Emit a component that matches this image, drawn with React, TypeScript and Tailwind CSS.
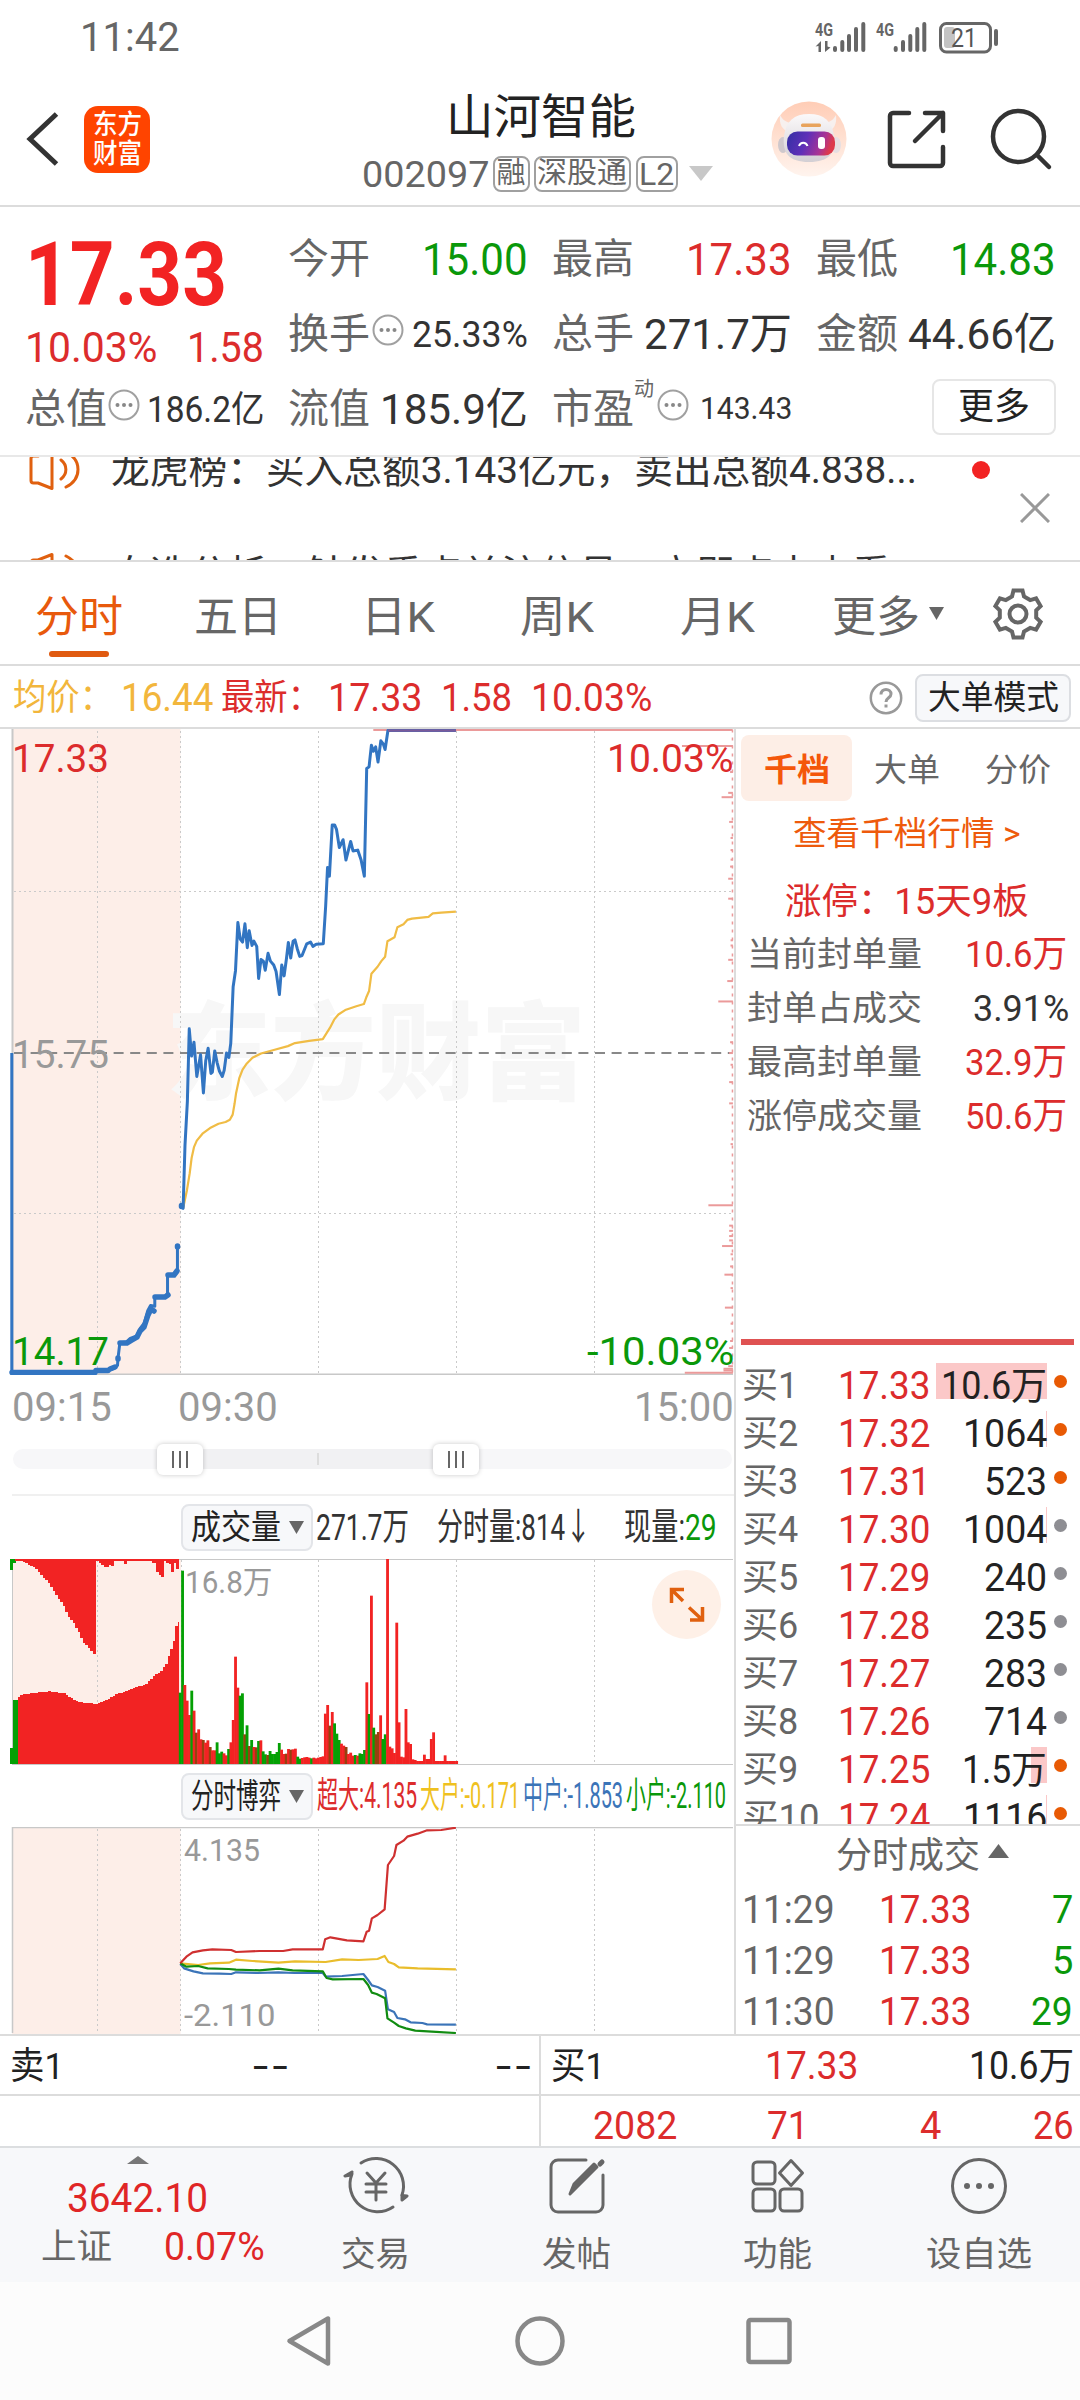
import { useLayoutEffect, useRef, type ReactNode } from "react";

const FONT = "font-[Roboto,'Noto_Sans_CJK_SC',sans-serif]";

// Squeezes or stretches a single line of text to the width of its box.
function Fit({ className, children }: { className: string; children: ReactNode }) {
  const box = useRef<HTMLSpanElement>(null);
  const text = useRef<HTMLSpanElement>(null);

  useLayoutEffect(() => {
    if (!box.current || !text.current) return;
    const ratio = box.current.clientWidth / text.current.offsetWidth;
    text.current.style.transform = `scaleX(${ratio})`;
  });

  return (
    <span ref={box} className={`block shrink-0 leading-none whitespace-nowrap ${className}`}>
      <span ref={text} className="inline-block origin-left">
        {children}
      </span>
    </span>
  );
}

type Pt = [number, number];

function lerp(points: Pt[], x: number) {
  for (let i = 1; i < points.length; i++) {
    const [x0, y0] = points[i - 1];
    const [x1, y1] = points[i];
    if (x <= x1) return y0 + ((y1 - y0) * (x - x0)) / (x1 - x0);
  }
  return points[points.length - 1][1];
}

function StatusBar() {
  return (
    <div className="flex h-[75px] items-center text-[#666]">
      <Fit className="mt-px ml-[80px] w-[100px] text-[40px]">11:42</Fit>
      <svg className="ml-[632px]" width="190" height="40" viewBox="812 17 190 40">
        <g fill="#666" fontFamily="Roboto, sans-serif" fontWeight="700" fontSize="18">
          <text x="815" y="34.5" textLength="18" lengthAdjust="spacingAndGlyphs">4G</text>
          <text x="876" y="34.5" textLength="18" lengthAdjust="spacingAndGlyphs">4G</text>
          <path d="M815.500 45.500l5.500-5.500v11h-2.500v-6zM825 40v11l5.500-4.500-3-1v-5.500z" />
        </g>
        <g stroke="#666" strokeWidth="4" strokeLinecap="round">
          <path d="M835 47v2M842.300 41v8M849 35v14M856 28v21M863.300 23v26" />
          <path d="M895.700 47v2M903 41v8M910.300 35v14M917.300 28v21M924.300 23v26" />
          <path d="M996 30v13" />
        </g>
        <rect x="944" y="26" width="11" height="21" rx="3" fill="#c4c4c4" />
        <rect x="940.500" y="22.500" width="50" height="28.500" rx="6" fill="none" stroke="#666" strokeWidth="3" />
        <text x="951" y="46" fill="#555" fontFamily="Roboto, sans-serif" fontSize="26" textLength="26" lengthAdjust="spacingAndGlyphs">21</text>
      </svg>
    </div>
  );
}

function Tag({ className, children }: { className: string; children: ReactNode }) {
  return (
    <span className={`flex h-[36px] items-center justify-center rounded-[8px] border-2 border-[#a0a0a0] ${className}`}>
      {children}
    </span>
  );
}

function Robot() {
  return (
    <svg width="76" height="76" viewBox="0 0 76 76">
      <defs>
        <linearGradient id="halo" x1="0" y1="0" x2="0" y2="1">
          <stop offset="0" stopColor="#ffcdb6" />
          <stop offset="1" stopColor="#fff4ee" />
        </linearGradient>
        <linearGradient id="visor" x1="0" y1="0" x2="1" y2="0.2">
          <stop offset="0" stopColor="#3430a4" />
          <stop offset="0.45" stopColor="#5f2fb8" />
          <stop offset="0.8" stopColor="#a83495" />
          <stop offset="1" stopColor="#dd3a4c" />
        </linearGradient>
        <linearGradient id="helmet" x1="0" y1="0" x2="0" y2="1">
          <stop offset="0" stopColor="#fbf9fa" />
          <stop offset="1" stopColor="#d3cfd4" />
        </linearGradient>
      </defs>
      <circle cx="38" cy="38" r="37.500" fill="url(#halo)" />
      <path d="M9 14c-1 9 2 15 9 17l7-9c-7 1-13-2-16-8zM65 14c1 9-2 15-9 17l-7-9c7 1 13-2 16-8z" fill="#f7f0ee" />
      <ellipse cx="12" cy="44" rx="5" ry="8" fill="#cfc8cc" />
      <ellipse cx="65" cy="44" rx="5" ry="8" fill="#e6dfe2" />
      <path d="M38 13c15 0 23 7 25 22 2 17-5 26-25 26S11 52 13 35c2-15 10-22 25-22z" fill="url(#helmet)" />
      <rect x="30" y="22.500" width="20" height="3.500" rx="1.500" fill="#e8a35c" />
      <rect x="16" y="30.500" width="48" height="24" rx="10.500" fill="url(#visor)" />
      <path d="M28 45c1.500-4.500 7-4.500 8.500 0" fill="none" stroke="#fff" strokeWidth="2" />
      <rect x="47" y="36" width="7" height="12" rx="3" fill="#fff" />
    </svg>
  );
}

function Header() {
  return (
    <div className="flex h-[132px] items-start border-b-2 border-[#dcdcdc]">
      <svg className="mt-[36px] ml-[24px]" width="36" height="56" viewBox="0 0 36 56" fill="none" stroke="#333" strokeWidth="5">
        <path d="M32.500 3L6 28l26.500 25" />
      </svg>
      <div className="mt-[31px] ml-[24px] flex h-[67px] w-[66px] flex-col items-center justify-center rounded-[14px] bg-[#ff4400] text-[27px] font-medium text-white">
        <Fit className="w-[49px]">东方</Fit>
        <Fit className="mt-[2px] w-[49px]">财富</Fit>
      </div>
      <div className="ml-[207px] flex w-[360px] flex-col items-center">
        <Fit className="mt-[18px] ml-[8px] w-[190px] text-[47px] text-[#222]">山河智能</Fit>
        <div className="mt-[14px] flex items-center text-[#666]">
          <Fit className="mt-[3px] mr-[4px] w-[127px] text-[36px]">002097</Fit>
          <Tag className="mr-[4px] w-[37px]">
            <Fit className="w-[29px] text-[29px]">融</Fit>
          </Tag>
          <Tag className="mr-[5px] w-[97px]">
            <Fit className="w-[90px] text-[29px]">深股通</Fit>
          </Tag>
          <Tag className="mr-[11px] w-[42px]">
            <Fit className="w-[35px] text-[32px]">L2</Fit>
          </Tag>
          <svg width="24" height="15" viewBox="0 0 24 15">
            <path d="M0 0h24L12 15z" fill="#c8c8c8" />
          </svg>
        </div>
      </div>
      <div className="mt-[26px] ml-[54px] flex">
        <Robot />
        <svg className="ml-[37px]" width="66" height="76" viewBox="884 101 66 76" fill="none" stroke="#333" strokeWidth="4.500" strokeLinecap="round" strokeLinejoin="round">
          <path d="M909 113h-16a3 3 0 0 0-3 3v47a3 3 0 0 0 3 3h47a3 3 0 0 0 3-3v-16M925 113h18v18M943 113l-28 28" />
        </svg>
        <svg className="ml-[38px]" width="66" height="76" viewBox="988 101 66 76" fill="none" stroke="#333" strokeWidth="4.500" strokeLinecap="round">
          <circle cx="1018.500" cy="136.500" r="25.500" />
          <path d="M1037 155l12 12" />
        </svg>
      </div>
    </div>
  );
}

function InfoDots({ className }: { className: string }) {
  return (
    <svg className={`shrink-0 ${className}`} width="32" height="32" viewBox="0 0 32 32">
      <circle cx="16" cy="16" r="14.500" fill="none" stroke="#a0a0a0" strokeWidth="2" />
      <circle cx="9.500" cy="16" r="2" fill="#888" />
      <circle cx="16" cy="16" r="2" fill="#888" />
      <circle cx="22.500" cy="16" r="2" fill="#888" />
    </svg>
  );
}

function Label({ children }: { children: ReactNode }) {
  return <Fit className="w-[82px] text-[41px] text-[#666]">{children}</Fit>;
}

function Quote() {
  return (
    <div className="h-[250px] border-b-2 border-[#e8e8e8] pt-[15px] pl-[25px]">
      <div className="grid grid-cols-[263px_264px_264px_240px] grid-rows-[75px_75px_75px] items-center">
        <div className="row-span-2 h-[150px] text-[#dc2c2c]">
          <div className="flex h-[102px] items-center pt-[2px]">
            <Fit className="w-[202px] text-[89px] font-bold text-[#f22323]">17.33</Fit>
          </div>
          <div className="flex h-[46px] items-center justify-between pr-[24px]">
            <Fit className="w-[133px] text-[43px]">10.03%</Fit>
            <Fit className="w-[77px] text-[43px]">1.58</Fit>
          </div>
        </div>
        <div className="flex items-center justify-between pr-[24px]">
          <Label>今开</Label>
          <Fit className="w-[106px] text-[44px] text-[#0a980a]">15.00</Fit>
        </div>
        <div className="flex items-center justify-between pr-[24px]">
          <Label>最高</Label>
          <Fit className="w-[106px] text-[44px] text-[#dc2c2c]">17.33</Fit>
        </div>
        <div className="flex items-center justify-between">
          <Label>最低</Label>
          <Fit className="w-[106px] text-[44px] text-[#0a980a]">14.83</Fit>
        </div>
        <div className="flex items-center pr-[24px]">
          <Label>换手</Label>
          <InfoDots className="mt-[-9px] ml-[2px]" />
          <Fit className="ml-auto w-[116px] text-[36px] text-[#333]">25.33%</Fit>
        </div>
        <div className="flex items-center justify-between pr-[24px]">
          <Label>总手</Label>
          <Fit className="w-[148px] text-[43px] text-[#333]">271.7万</Fit>
        </div>
        <div className="flex items-center justify-between">
          <Label>金额</Label>
          <Fit className="w-[148px] text-[43px] text-[#333]">44.66亿</Fit>
        </div>
        <div className="flex items-center pr-[24px]">
          <Label>总值</Label>
          <InfoDots className="mt-[-9px] ml-[1px]" />
          <Fit className="ml-auto w-[117px] text-[36px] text-[#333]">186.2亿</Fit>
        </div>
        <div className="flex items-center justify-between pr-[24px]">
          <Label>流值</Label>
          <Fit className="w-[148px] text-[43px] text-[#333]">185.9亿</Fit>
        </div>
        <div className="flex items-center pr-[24px]">
          <Label>市盈</Label>
          <Fit className="mt-[-42px] w-[20px] text-[20px] text-[#666]">动</Fit>
          <InfoDots className="mt-[-9px] ml-[3px]" />
          <Fit className="mt-[-2px] ml-auto w-[92px] text-[31px] text-[#333]">143.43</Fit>
        </div>
        <div className="mt-[-6px] ml-auto flex h-[56px] w-[124px] items-center justify-center rounded-[8px] border-2 border-[#e6e6e6]">
          <Fit className="w-[72px] text-[36px] text-[#222]">更多</Fit>
        </div>
      </div>
    </div>
  );
}

function Speaker() {
  return (
    <svg className="shrink-0" width="54" height="42" viewBox="0 0 54 42" fill="none" stroke="#e0600f" strokeWidth="3" strokeLinecap="round" strokeLinejoin="round">
      <path d="M10 7H5.500A2.500 2.500 0 0 0 3 9.500v22A2.500 2.500 0 0 0 5.500 34H10l14 5.500v-38L10 7" />
      <path d="M33 11c6.500 5 6.500 14 0 19M38 3c16 8 16 27 0 35" />
    </svg>
  );
}

function News() {
  return (
    <div className="relative h-[105px] overflow-hidden border-b-2 border-[#dcdcdc] text-[38px] text-[#333]">
      <div className="-mt-[39px] ml-[28px] flex h-[104px] items-center">
        <Speaker />
        <Fit className="ml-[29px] w-[806px]">龙虎榜：买入总额3.143亿元，卖出总额4.838...</Fit>
        <span className="ml-[55px] size-[18px] rounded-full bg-[#f22323]" />
      </div>
      <div className="ml-[28px] flex h-[104px] items-center">
        <Speaker />
        <Fit className="ml-[29px] w-[780px]">自选分析：触发重点关注信号，立即点击查看</Fit>
      </div>
      <svg className="absolute top-[36px] right-[30px]" width="30" height="30" viewBox="0 0 30 30" stroke="#999" strokeWidth="3">
        <path d="M1 1l28 28M29 1L1 29" />
      </svg>
    </div>
  );
}

function gearPath() {
  const pts: string[] = [];
  for (let k = 0; k < 6; k++) {
    const a = (k * Math.PI) / 3;
    const corners: Pt[] = [[-6, -17.5], [-4.5, -23.5], [4.5, -23.5], [6, -17.5]];
    for (const [x, y] of corners) {
      const px = x * Math.cos(a) - y * Math.sin(a);
      const py = x * Math.sin(a) + y * Math.cos(a);
      pts.push(`${px.toFixed(1)} ${py.toFixed(1)}`);
    }
  }
  return `M${pts.join("L")}Z`;
}

function Tabs() {
  return (
    <div className="flex h-[104px] border-b-2 border-[#dcdcdc] text-[43px] text-[#666]">
      <div className="ml-[35px] flex w-[88px] flex-col items-center pt-[34px]">
        <Fit className="w-[88px] text-[#e8590c]">分时</Fit>
        <span className="mt-[12px] h-[6px] w-[60px] rounded-full bg-[#e05a10]" />
      </div>
      <Fit className="mt-[34px] ml-[71px] w-[88px]">五日</Fit>
      <Fit className="mt-[34px] ml-[79px] w-[74px]">日K</Fit>
      <Fit className="mt-[34px] ml-[85px] w-[74px]">周K</Fit>
      <Fit className="mt-[34px] ml-[86px] w-[75px]">月K</Fit>
      <Fit className="mt-[34px] ml-[77px] w-[88px]">更多</Fit>
      <svg className="mt-[45px] ml-[9px]" width="15" height="13" viewBox="0 0 15 13">
        <path d="M0 0h15L7.500 13z" fill="#666" />
      </svg>
      <svg className="mt-[24px] ml-[46px]" width="56" height="56" viewBox="-28 -28 56 56" fill="none" stroke="#666" strokeWidth="4">
        <path d={gearPath()} />
        <circle r="8.500" />
      </svg>
    </div>
  );
}

function InfoRow() {
  return (
    <div className="flex h-[63px] items-center border-b-2 border-[#dcdcdc] pt-[2px] text-[36px] text-[#dc2c2c]">
      <Fit className="ml-[13px] w-[100px] text-[#f2b63c]">均价：</Fit>
      <Fit className="ml-[8px] w-[92px] text-[38px] text-[#f2b63c]">16.44</Fit>
      <Fit className="ml-[8px] w-[100px]">最新：</Fit>
      <Fit className="ml-[7px] w-[94px] text-[38px]">17.33</Fit>
      <Fit className="ml-[19px] w-[71px] text-[38px]">1.58</Fit>
      <Fit className="ml-[19px] w-[121px] text-[38px]">10.03%</Fit>
      <svg className="ml-[217px]" width="34" height="34" viewBox="0 0 34 34" fill="none" stroke="#999" strokeWidth="2.500">
        <circle cx="17" cy="17" r="15.200" />
        <path d="M12 13.500c0-7 10-6.500 10-.5 0 4-5 3.500-5 8" strokeWidth="3" />
        <path d="M17 23.500v3" strokeWidth="3" />
      </svg>
      <div className="ml-[12px] flex h-[48px] w-[156px] items-center justify-center rounded-[8px] border-2 border-[#dcdee2] bg-[#f7f8fa]">
        <Fit className="w-[131px] text-[33px] text-[#222]">大单模式</Fit>
      </div>
    </div>
  );
}

const GRID_X = [97.5, 318.5, 456.5, 594.5];

const PRICE_LINE =
  "25,768 25,1504 200,1504 205,1500 230,1500 243,1494 249,1488 250,1472 254,1436 268,1434 276,1426 290,1420 297,1403 306,1390 313,1362 319,1350 328,1352 328,1331 350,1330 355,1322 355,1280 368,1278 376,1268 376,1214";
const OPEN_LINE =
  "382,1120 388,1126 392,980 397,880 401,712 406,775 411,743 417,822 425,772 431,860 436,785 441,757 447,815 450,812 455,763 460,790 465,810 471,822 475,808 480,768 485,778 489,745 494,615 499,578 504,467 509,505 514,512 519,470 524,525 528,486 534,520 538,510 544,522 548,596 553,552 558,556 562,577 568,538 573,556 580,565 585,580 592,633 597,565 602,590 607,550 611,513 616,549 621,510 625,507 630,528 635,545 640,543 650,516 658,512 663,522 670,517 685,516 690,430 694,340 698,360 704,242 709,242 713,252 719,294 727,276 733,323 743,280 748,302 758,300 765,322 772,360 777,112 782,108 787,58 791,72 796,62 801,97 807,48 812,55 816,68 822,24 966,24";
const AVG_LINE =
  "388,1126 396,1085 402,1045 406,1010 411,985 417,970 429,954 445,941 463,931 478,927 487,922 493,910 497,885 500,862 507,826 514,806 523,792 535,779 553,769 580,761 610,752 625,745 655,740 684,736 692,722 699,710 708,691 717,679 733,668 755,660 771,655 776,640 782,625 787,585 800,569 808,556 816,546 821,510 836,501 842,478 855,471 863,461 873,458 908,454 917,446 935,444 966,442";

// [y, length] of the volume-by-price ticks along the right edge
const PRICE_TICKS: Pt[] = [
  [60, 108], [120, 6], [168, 10], [178, 24], [235, 8], [272, 5], [300, 5], [322, 5], [338, 6], [366, 10],
  [412, 10], [508, 5], [520, 5], [553, 10], [602, 12], [649, 31], [743, 6], [768, 8], [795, 5], [835, 8],
  [884, 8], [978, 5], [1119, 52], [1166, 8], [1178, 8], [1190, 8], [1200, 8], [1213, 23], [1232, 5],
  [1260, 6], [1279, 18], [1310, 5], [1355, 17], [1392, 5], [1432, 6], [1448, 8], [1490, 10], [1496, 20],
  [1500, 20], [1505, 102],
];

function PriceChart() {
  return (
    <div className="relative h-[646px] text-[39px]">
      <svg className="block" width="734" height="646" viewBox="0 729 734 646">
        <rect x="12" y="729" width="168.500" height="646" fill="#fdeee8" />
        <g fill="#f7f7f7" fontFamily="'Noto Sans CJK SC', sans-serif" fontWeight="900">
          <text x="166" y="1091" fontSize="106" textLength="420" lengthAdjust="spacingAndGlyphs">东方财富</text>
        </g>
        <g stroke="#cacaca" strokeWidth="1" strokeDasharray="2 3" shapeRendering="crispEdges">
          {[...GRID_X, 180.5].map((x) => (
            <path key={x} d={`M${x} 731V1374`} />
          ))}
          <path d="M14 891.500H732M14 1213.500H732" />
        </g>
        <path d="M14 1053H732" stroke="#888" strokeWidth="2" strokeDasharray="10 6.600" />
        <path d="M12.500 729V1375M10 1374.500H733" stroke="#c8c8c8" strokeWidth="2" fill="none" />
        <g transform="translate(0 720) scale(0.47194 0.43367)" fill="none" strokeLinejoin="round">
          <g stroke="#eb9a9a" strokeWidth="2">
            <path d="M791 23H1552" vectorEffect="non-scaling-stroke" />
            {PRICE_TICKS.map(([y, len]) => (
              <path key={y} d={`M${1553 - len} ${y}H1553`} vectorEffect="non-scaling-stroke" />
            ))}
            <path d="M1552 22V1508" strokeDasharray="3 5" strokeWidth="1.500" vectorEffect="non-scaling-stroke" />
          </g>
          <polyline points={AVG_LINE} stroke="#f0bc45" strokeWidth="2.200" vectorEffect="non-scaling-stroke" />
          <polyline points={PRICE_LINE} stroke="#3275c2" strokeWidth="3" vectorEffect="non-scaling-stroke" />
          <polyline points={OPEN_LINE} stroke="#3275c2" strokeWidth="3" vectorEffect="non-scaling-stroke" />
          <path d="M822 24H966" stroke="#7a5a9a" strokeWidth="2.500" vectorEffect="non-scaling-stroke" />
        </g>
        <g stroke="#3275c2" strokeWidth="5.500" fill="none" strokeLinecap="round">
          <path d="M12 1372.500H95M96 1370.500H108M110 1369l5-2M118 1359v-1M120 1343h7l5-3 5-3 3-6 4-4 4-12 3-6 3 2M155 1297h10l3-2M168 1275h6l3-4M177.500 1246v1M181.500 1205.500v1" />
        </g>
      </svg>
      <Fit className="absolute top-[11px] left-[12px] w-[97px] text-[#dc2c2c]">17.33</Fit>
      <Fit className="absolute top-[11px] left-[607px] w-[127px] text-[#dc2c2c]">10.03%</Fit>
      <Fit className="absolute top-[307px] left-[12px] w-[97px] text-[#999]">15.75</Fit>
      <Fit className="absolute top-[604px] left-[12px] w-[97px] text-[#0a980a]">14.17</Fit>
      <Fit className="absolute top-[604px] left-[587px] w-[147px] text-[#0a980a]">-10.03%</Fit>
    </div>
  );
}

function Handle({ className }: { className: string }) {
  return (
    <span className={`absolute -top-[5px] flex h-[31px] w-[46px] items-center justify-center gap-[5px] rounded-[6px] bg-white shadow-[0_0_5px_rgba(0,0,0,0.22)] ${className}`}>
      <span className="h-[17px] w-[2px] bg-[#666]" />
      <span className="h-[17px] w-[2px] bg-[#666]" />
      <span className="h-[17px] w-[2px] bg-[#666]" />
    </span>
  );
}

function TimeAxis() {
  return (
    <>
      <div className="flex h-[64px] items-center pt-[2px] text-[40px] text-[#999]">
        <Fit className="ml-[12px] w-[100px]">09:15</Fit>
        <Fit className="ml-[66px] w-[100px]">09:30</Fit>
        <Fit className="ml-auto w-[100px]">15:00</Fit>
      </div>
      <div className="ml-[12px] h-[57px] border-b-2 border-[#f0f0f0] pt-[10px]">
        <div className="relative mr-[2px] ml-[1px] flex h-[20px] items-center rounded-full bg-[#f7f7f9] pl-[167px]">
          <div className="flex h-[20px] w-[276px] items-center justify-center bg-[#f1f1f3]">
            <span className="h-[12px] w-[2px] bg-[#ddd]" />
          </div>
          <Handle className="left-[144px]" />
          <Handle className="left-[420px]" />
        </div>
      </div>
    </>
  );
}

function Picker({ children }: { children: ReactNode }) {
  return (
    <div className="ml-[181px] flex h-[47px] w-[132px] shrink-0 items-center rounded-[8px] border-2 border-[#e3e5e9] bg-[#f7f8fa] pl-[8px] text-[34px] text-[#222]">
      <Fit className="w-[90px]">{children}</Fit>
      <svg className="ml-[8px]" width="15" height="13" viewBox="0 0 15 13">
        <path d="M0 0h15L7.500 13z" fill="#666" />
      </svg>
    </div>
  );
}

const RED = "#f22323";
const GREEN = "#04a004";
const BROWN = "#95420f";

// One entry per minute from 09:30, height in thirds of a pixel
const BARS =
  "g214 g580 r237 r190 r147 g220 r160 b94 r104 r74 b72 r64 r71 b51 r41 r41 g65 g32 g37 r32 r26 g45 r65 r132 r322 r229 g205 g212 b89 g116 b54 g72 r51 b50 g69 r71 g38 g29 b27 g39 g30 g30 g36 g63 r43 r30 b31 r45 b43 r44 r46 g22 g16 r18 r20 r21 r19 g17 r19 r17 r19 r21 r23 r151 r177 b115 r156 g122 g91 g72 r61 r55 b51 r30 r34 r25 g27 r25 g32 g30 g42 r245 g150 r505 g109 b89 b96 r146 g75 g89 r615 r52 r47 r33 r424 r125 r22 r20 r165 r65 r60 r14 r12 r9 r9 r9 r28 r15 r15 r75 r95 r9 r9 r9 r9 r26 r9 r9 r9 r9 r9"
    .split(" ");

const MATCHED: Pt[] = [
  [50, 414], [70, 403], [110, 398], [150, 394], [195, 400], [205, 411], [240, 427], [290, 432], [320, 420],
  [345, 405], [390, 388], [440, 372], [460, 350], [485, 332], [500, 310], [515, 265], [525, 235], [531, 187], [540, 187],
];
const UNMATCHED: Pt[] = [
  [54, 0], [62, 3], [80, 10], [110, 26], [135, 55], [150, 70], [165, 98], [195, 140], [205, 168], [220, 185],
  [240, 220], [250, 246], [268, 264], [288, 288],
];
const SPIKES: Pt[] = [
  [294, 4], [301, 10], [308, 14], [315, 20], [322, 22], [330, 16], [337, 18], [345, 4], [375, 13], [459, 10],
  [465, 8], [473, 37], [480, 46], [488, 50], [502, 10], [510, 12], [517, 37], [525, 8], [533, 26],
];

function VolumeChart() {
  const steps = Array.from({ length: 65 }, (_, i) => 54 + i * 7.5);
  return (
    <div className="relative h-[206px]">
      <svg className="block" width="734" height="206" viewBox="0 1559 734 206" shapeRendering="crispEdges">
        <rect x="12" y="1559" width="168.500" height="206" fill="#fdeee8" />
        <g stroke="#cacaca" strokeWidth="1" strokeDasharray="2 3">
          {[...GRID_X, 181.5].map((x) => (
            <path key={x} d={`M${x} 1560V1764`} />
          ))}
        </g>
        <path d="M12.500 1559V1764M12 1764.500H733M12 1559.500H733" stroke="#c8c8c8" strokeWidth="1.500" />
        <g transform="translate(0 1560) scale(0.33333)">
          <rect x="31" y="563" width="8" height="49" fill={GREEN} />
          <rect x="38" y="420" width="17" height="192" fill={GREEN} />
          <rect x="31" y="-3" width="9" height="33" fill={GREEN} />
          <rect x="39" y="-3" width="9" height="12" fill={GREEN} />
          {steps.map((x) => (
            <rect key={x} x={x} y={lerp(MATCHED, x + 3)} width={Math.min(8, 538 - x)} height={612 - lerp(MATCHED, x + 3)} fill={RED} />
          ))}
          {steps.filter((x) => x < 284).map((x) => (
            <rect key={x} x={x} y={-3} width="8" height={lerp(UNMATCHED, x + 4) + 3} fill={RED} />
          ))}
          <rect x="46" y="-3" width="492" height="5" fill={RED} />
          {SPIKES.map(([x, depth]) => (
            <rect key={x} x={x - 4} y={-3} width="9" height={depth + 3} fill={RED} />
          ))}
          <g shapeRendering="auto">
            {BARS.map((bar, i) => {
              const h = Number(bar.slice(1));
              const fill = bar[0] === "g" ? GREEN : bar[0] === "b" ? BROWN : RED;
              return <rect key={i} x={536.5 + i * 6.91} y={612 - h} width="8.500" height={h} fill={fill} />;
            })}
          </g>
        </g>
      </svg>
      <Fit className="absolute top-[8px] left-[185px] w-[87px] text-[31px] text-[#999]">16.8万</Fit>
      <div className="absolute top-[11px] right-[13px] size-[69px] rounded-full bg-[#fef0e7]">
        <svg width="69" height="69" viewBox="0 0 69 69" fill="none" stroke="#e0600f" strokeWidth="3.500">
          <path d="M32 19.500H19.500V33M19.500 19.500L31 31M38 50h12.500V37M50.500 50L37 37.500" />
        </svg>
      </div>
    </div>
  );
}

const FLOWS = [
  { stroke: "#e9bd2c", points: "382,640 420,645 445,640 485,638 500,629 535,633 590,638 625,634 690,636 725,628 760,630 800,627 815,618 823,636 835,642 845,652 885,655 966,658" },
  { stroke: "#3b74b8", points: "382,642 390,655 410,664 430,670 465,671 490,672 500,667 545,669 590,667 625,669 684,669 690,680 725,678 770,672 780,690 788,706 800,711 816,722 822,778 835,786 842,804 858,808 870,817 895,819 905,823 966,824" },
  { stroke: "#118c11", points: "382,640 395,650 420,648 440,655 485,657 500,659 550,661 590,656 620,661 684,664 692,684 705,688 770,687 780,705 788,728 798,732 816,745 821,805 835,818 845,828 860,835 880,842 915,845 966,849" },
  { stroke: "#cf3030", points: "382,640 395,620 408,607 430,601 450,598 490,600 500,606 550,603 600,603 620,598 684,598 689,568 700,562 735,571 770,574 777,545 782,542 788,505 800,495 815,478 822,345 835,318 840,285 855,272 863,260 885,251 905,241 935,240 966,233" },
];

function FlowChart() {
  return (
    <div className="relative h-[207px] text-[31px] text-[#999]">
      <svg className="block" width="734" height="207" viewBox="0 1827 734 207">
        <rect x="12" y="1827" width="168.500" height="207" fill="#fdeee8" />
        <g stroke="#cacaca" strokeWidth="1" strokeDasharray="2 3" shapeRendering="crispEdges">
          {[...GRID_X, 180.5].map((x) => (
            <path key={x} d={`M${x} 1829V2033`} />
          ))}
        </g>
        <path d="M12.500 1827V2033M12 1827.500H733" stroke="#c8c8c8" strokeWidth="1.500" />
        <g transform="translate(0 1750) scale(0.47194 0.33333)" fill="none" strokeLinejoin="round">
          {FLOWS.map((f) => (
            <polyline key={f.stroke} points={f.points} stroke={f.stroke} strokeWidth="2.200" vectorEffect="non-scaling-stroke" />
          ))}
        </g>
      </svg>
      <Fit className="absolute top-[8px] left-[184px] w-[76px]">4.135</Fit>
      <Fit className="absolute top-[173px] left-[184px] w-[91px]">-2.110</Fit>
    </div>
  );
}

const BIDS = [
  { price: "17.33", qty: "10.6万", w: "w-[106px]", bar: "w-[111px]", hot: true },
  { price: "17.32", qty: "1064", w: "w-[84px]", bar: "w-px", hot: true },
  { price: "17.31", qty: "523", w: "w-[63px]", bar: "w-0", hot: true },
  { price: "17.30", qty: "1004", w: "w-[84px]", bar: "w-px", hot: false },
  { price: "17.29", qty: "240", w: "w-[63px]", bar: "w-0", hot: false },
  { price: "17.28", qty: "235", w: "w-[63px]", bar: "w-0", hot: false },
  { price: "17.27", qty: "283", w: "w-[63px]", bar: "w-0", hot: false },
  { price: "17.26", qty: "714", w: "w-[63px]", bar: "w-0", hot: false },
  { price: "17.25", qty: "1.5万", w: "w-[85px]", bar: "w-[16px]", hot: true },
  { price: "17.24", qty: "1116", w: "w-[84px]", bar: "w-px", hot: true },
];

const LIMIT_UP = [
  { label: "当前封单量", value: "10.6万", w: "w-[102px]", color: "text-[#dc2c2c]" },
  { label: "封单占成交", value: "3.91%", w: "w-[96px] translate-x-[2px]", color: "text-[#333]" },
  { label: "最高封单量", value: "32.9万", w: "w-[102px]", color: "text-[#dc2c2c]" },
  { label: "涨停成交量", value: "50.6万", w: "w-[102px]", color: "text-[#dc2c2c]" },
];

const TRADES = [
  { time: "11:29", qty: "7", w: "w-[21px]" },
  { time: "11:29", qty: "5", w: "w-[21px]" },
  { time: "11:30", qty: "29", w: "w-[42px]" },
];

function OrderPanel() {
  return (
    <div className="flex h-[1305px] w-[346px] flex-col border-l-2 border-[#dcdcdc]">
      <div className="mt-[6px] ml-[5px] flex h-[66px] shrink-0 items-center text-[32px] text-[#666]">
        <div className="flex h-[66px] w-[111px] items-center justify-center rounded-[8px] bg-[#fdeee6] pt-[3px]">
          <Fit className="w-[66px] font-bold text-[#f4570a]">千档</Fit>
        </div>
        <Fit className="mt-[3px] ml-[22px] w-[66px]">大单</Fit>
        <Fit className="mt-[3px] ml-[45px] w-[66px]">分价</Fit>
      </div>
      <div className="mt-[16px] flex shrink-0 pl-[57px] text-[33px] text-[#ee5a0c]">
        <Fit className="w-[227px]">查看千档行情 &gt;</Fit>
      </div>
      <div className="mt-[34px] flex shrink-0 pl-[49px] text-[36px] text-[#dc2c2c]">
        <Fit className="w-[244px]">涨停：15天9板</Fit>
      </div>
      <div className="mt-[7px] h-[412px] shrink-0 pr-[13px] pl-[11px]">
        {LIMIT_UP.map((row) => (
          <div key={row.label} className="flex h-[54px] items-center justify-between">
            <Fit className="w-[175px] text-[34px] text-[#666]">{row.label}</Fit>
            <Fit className={`${row.w} text-[37px] ${row.color}`}>{row.value}</Fit>
          </div>
        ))}
      </div>
      <div className="mr-[6px] ml-[5px] h-[6px] shrink-0 bg-[#df5252]" />
      <div className="mt-[16px] flex h-[465px] shrink-0 flex-col overflow-hidden border-b-2 border-[#dcdcdc]">
        {BIDS.map((row, i) => (
          <div key={row.price} className="flex h-[48px] shrink-0 items-center pl-[6px] text-[38px]">
            <Fit className={`${i === 9 ? "w-[77px]" : "w-[56px]"} mt-[2px] text-[36px] text-[#666]`}>买{i + 1}</Fit>
            <Fit className={`${i === 9 ? "ml-[19px]" : "ml-[40px]"} mt-[2px] w-[92px] text-[#dc2c2c]`}>{row.price}</Fit>
            <div className="relative ml-[6px] flex h-[48px] w-[111px] items-center justify-end">
              <span className={`absolute top-[2px] right-0 h-[36px] bg-[#fbc8c8] ${row.bar}`} />
              <Fit className={`relative mt-[2px] text-[#222] ${row.w}`}>{row.qty}</Fit>
            </div>
            <span className={`mt-[-8px] ml-[7px] size-[13px] rounded-full ${row.hot ? "bg-[#e85a04]" : "bg-[#8e8e93]"}`} />
          </div>
        ))}
      </div>
      <div className="flex h-[57px] shrink-0 items-center gap-[8px] pt-[2px] pl-[100px]">
        <Fit className="w-[144px] text-[36px] text-[#666]">分时成交</Fit>
        <svg className="mt-[-9px]" width="21" height="14" viewBox="0 0 21 14">
          <path d="M0 14h21L10.500 0z" fill="#666" />
        </svg>
      </div>
      {TRADES.map((row, i) => (
        <div key={i} className="flex h-[51px] shrink-0 items-center pt-[2px] pr-[7px] pl-[6px] text-[38px]">
          <Fit className="w-[93px] text-[#666]">{row.time}</Fit>
          <Fit className="ml-[44px] w-[92px] text-[#dc2c2c]">17.33</Fit>
          <Fit className={`ml-auto text-[#0a980a] ${row.w}`}>{row.qty}</Fit>
        </div>
      ))}
    </div>
  );
}

function DepthRows() {
  return (
    <div className="flex h-[112px] border-t-2 border-[#dcdcdc] text-[38px] text-[#222]">
      <div className="w-[541px] border-r-2 border-[#dcdcdc]">
        <div className="flex h-[60px] items-center border-b-2 border-[#dcdcdc] pt-[2px] pr-[4px] pl-[10px]">
          <Fit className="w-[54px] text-[37px]">卖1</Fit>
          <Fit className="ml-[189px] w-[39px] tracking-[3px]">--</Fit>
          <Fit className="ml-auto w-[39px] tracking-[3px]">--</Fit>
        </div>
      </div>
      <div className="flex-1">
        <div className="flex h-[60px] items-center border-b-2 border-[#dcdcdc] pt-[2px] pr-[6px] pl-[10px]">
          <Fit className="w-[54px] text-[37px]">买1</Fit>
          <Fit className="ml-[160px] w-[93px] text-[#dc2c2c]">17.33</Fit>
          <Fit className="ml-auto w-[105px]">10.6万</Fit>
        </div>
        <div className="flex h-[50px] items-center pt-[10px] pr-[6px] pl-[52px] text-[#dc2c2c]">
          <Fit className="w-[84px]">2082</Fit>
          <Fit className="ml-[90px] w-[42px]">71</Fit>
          <Fit className="ml-[111px] w-[21px]">4</Fit>
          <Fit className="ml-auto w-[41px]">26</Fit>
        </div>
      </div>
    </div>
  );
}

function NavItem({ label, className, children }: { label: string; className: string; children: ReactNode }) {
  return (
    <div className="flex w-[201px] flex-col items-center">
      <svg className="mt-[8px]" width="66" height="60" viewBox="-33 -30 66 60" fill="none" stroke="#666" strokeWidth="3" strokeLinecap="round" strokeLinejoin="round">
        {children}
      </svg>
      <Fit className={`mt-[21px] text-[34px] ${className}`}>{label}</Fit>
    </div>
  );
}

function BottomNav() {
  return (
    <div className="flex h-[136px] border-t-2 border-[#dcdee0] bg-[#f7f8fa] text-[#666]">
      <div className="flex w-[275px] flex-col items-center">
        <svg className="mt-[8px]" width="22" height="8" viewBox="0 0 22 8">
          <path d="M0 8h22L11 0z" fill="#777" />
        </svg>
        <Fit className="mt-[14px] w-[141px] text-[41px] text-[#e02626]">3642.10</Fit>
        <div className="mt-[9px] ml-[41px] flex items-center self-start">
          <Fit className="w-[71px] text-[35px]">上证</Fit>
          <Fit className="ml-[52px] w-[101px] text-[39px] text-[#e02626]">0.07%</Fit>
        </div>
      </div>
      <NavItem label="交易" className="w-[69px]">
        <path d="M-15-23A27.500 27.500 0 0 1 26 9M17 21A27.500 27.500 0 0 1-24-12" />
        <path d="M26 14l5-4-5-.5zM-24-14l-7 4 6-1z" fill="#666" />
        <path d="M-9-13L0-3l9-10M0-3v17M-10-2h20M-10 6h20" />
      </NavItem>
      <NavItem label="发帖" className="w-[69px]">
        <path d="M9-26h-28a7 7 0 0 0-7 7v38a7 7 0 0 0 7 7h38a7 7 0 0 0 7-7v-30" />
        <path d="M20-19L-1 2l-6 6 4-10L17-22z" fill="#666" />
        <path d="M23-22l2-2" strokeWidth="5" />
      </NavItem>
      <NavItem label="功能" className="w-[69px]">
        <rect x="-25" y="-24" width="22" height="22" rx="4" />
        <rect x="-25" y="3" width="22" height="22" rx="4" />
        <rect x="2" y="3" width="22" height="22" rx="4" />
        <path d="M13-25.500l11.500 12.500L13-.5 1.500-13z" />
      </NavItem>
      <NavItem label="设自选" className="w-[106px]">
        <circle r="26.500" />
        <g fill="#666" stroke="none">
          <circle cx="-12" r="3" />
          <circle r="3" />
          <circle cx="12" r="3" />
        </g>
      </NavItem>
    </div>
  );
}

export default function App() {
  return (
    <div className={`flex h-[2400px] w-[1080px] flex-col overflow-hidden bg-white ${FONT}`}>
      <StatusBar />
      <Header />
      <Quote />
      <News />
      <Tabs />
      <InfoRow />

      <div className="flex h-[1305px]">
        <div className="w-[734px]">
          <PriceChart />
          <TimeAxis />
          <div className="flex h-[63px] items-center pb-px text-[37px] text-[#333]">
            <Picker>成交量</Picker>
            <Fit className="ml-[3px] w-[93px]">271.7万</Fit>
            <Fit className="ml-[28px] w-[154px]">分时量:814↓</Fit>
            <Fit className="ml-[33px] w-[61px]">现量:</Fit>
            <Fit className="w-[32px] text-[#0a980a]">29</Fit>
          </div>
          <VolumeChart />
          <div className="flex h-[62px] items-center text-[36px]">
            <Picker>分时博弈</Picker>
            <Fit className="ml-[4px] w-[100px] text-[#dc2c2c]">超大:4.135</Fit>
            <Fit className="ml-[3px] w-[100px] text-[#efc11f]">大户:-0.171</Fit>
            <Fit className="ml-[3px] w-[100px] text-[#3b74b8]">中户:-1.853</Fit>
            <Fit className="ml-[3px] w-[100px] text-[#0a980a]">小户:-2.110</Fit>
          </div>
          <FlowChart />
        </div>
        <OrderPanel />
      </div>

      <DepthRows />
      <BottomNav />

      {/* System navigation */}
      <div className="flex-1 bg-[#fcfcfc] pt-[29px]">
        <svg className="block" width="1080" height="60" viewBox="0 2311 1080 60" fill="none" stroke="#888" strokeWidth="4.500" strokeLinejoin="round">
          <path d="M328 2318.500v45L289.500 2341z" />
          <circle cx="540" cy="2341" r="22.500" />
          <rect x="748.500" y="2320" width="41" height="42" rx="2" />
        </svg>
      </div>
    </div>
  );
}
